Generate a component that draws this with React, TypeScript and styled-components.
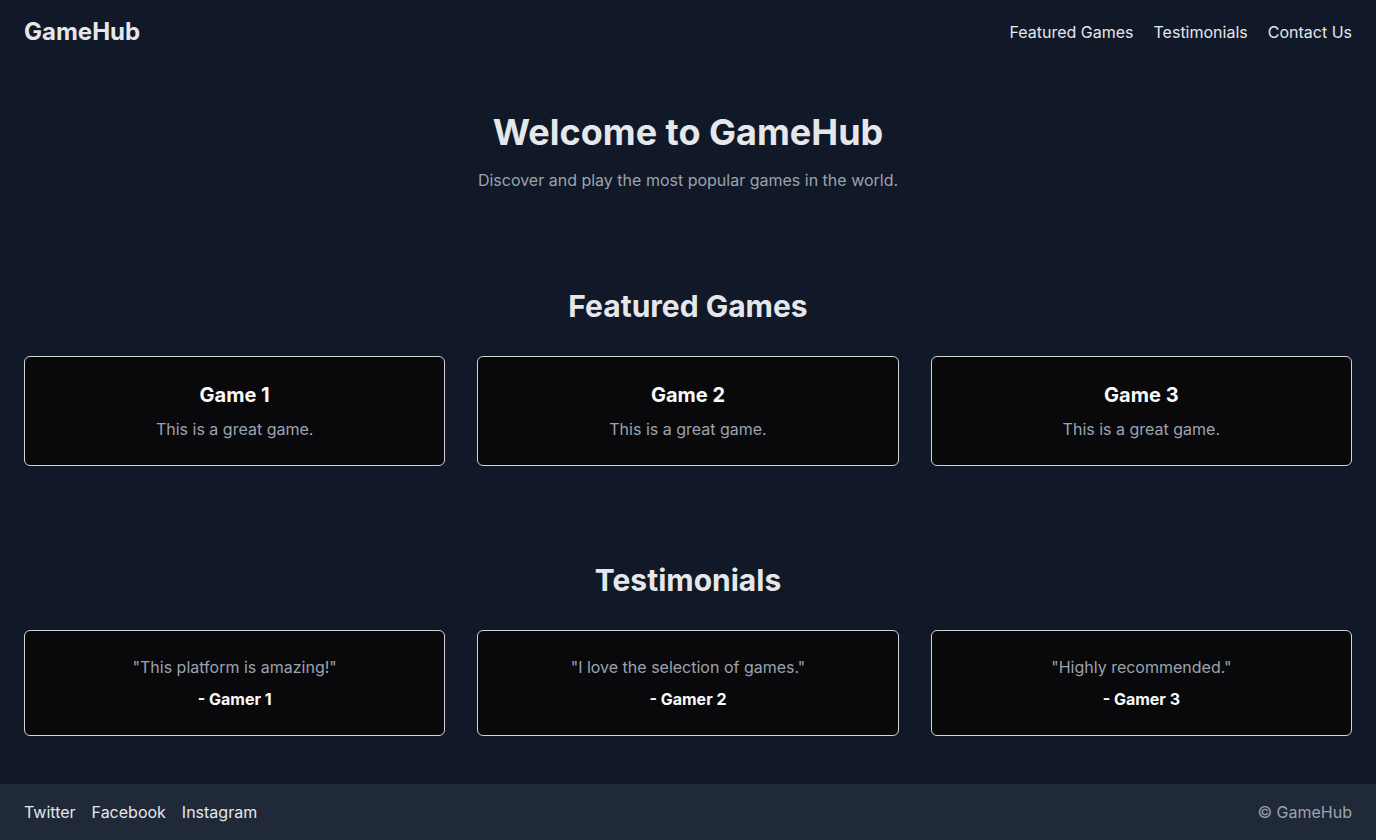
import styled, { createGlobalStyle } from 'styled-components';

const GlobalStyle = createGlobalStyle`
  * {
    box-sizing: border-box;
  }

  body {
    margin: 0;
    background: #111827;
    color: #e5e7eb;
    font-family: Inter, "Noto Sans", sans-serif;
  }
`;

const Page = styled.div`
  min-height: 840px;
  display: flex;
  flex-direction: column;
`;

const Header = styled.header`
  padding: 16px 24px;
  display: flex;
  align-items: center;
  justify-content: space-between;
`;

const Logo = styled.div`
  font-size: 24px;
  line-height: 32px;
  font-weight: 700;
  color: #e5e7eb;
`;

const Nav = styled.nav`
  display: flex;
  gap: 20px;
`;

const NavLink = styled.a`
  font-size: 16px;
  line-height: 24px;
  color: #e5e7eb;
  text-decoration: none;
`;

const Hero = styled.section`
  padding: 48px 24px;
  text-align: center;
`;

const HeroTitle = styled.h1`
  margin: 0 0 16px;
  font-size: 36px;
  line-height: 40px;
  font-weight: 700;
  color: #e5e7eb;
`;

const HeroText = styled.p`
  margin: 0;
  font-size: 16px;
  line-height: 24px;
  color: #9ca3af;
`;

const Section = styled.section`
  padding: 48px 24px;
`;

const SectionTitle = styled.h2`
  margin: 0 0 32px;
  font-size: 30px;
  line-height: 36px;
  font-weight: 700;
  text-align: center;
  color: #e5e7eb;
`;

const Grid = styled.div`
  display: grid;
  grid-template-columns: repeat(3, 1fr);
  gap: 32px;
`;

const Card = styled.div`
  padding: 24px;
  background: #09090b;
  border: 1px solid #d4d4d8;
  border-radius: 6px;
  text-align: center;
`;

const CardTitle = styled.h3`
  margin: 0 0 8px;
  font-size: 20px;
  line-height: 28px;
  font-weight: 700;
  color: #fafafa;
`;

const CardText = styled.p`
  margin: 0 0 8px;
  font-size: 16px;
  line-height: 24px;
  color: #9ca3af;

  &:last-child {
    margin-bottom: 0;
  }
`;

const Author = styled.p`
  margin: 0;
  font-size: 16px;
  line-height: 24px;
  font-weight: 700;
  color: #fafafa;
`;

const Footer = styled.footer`
  margin-top: auto;
  padding: 16px 24px;
  background: #1f2937;
  display: flex;
  align-items: center;
  justify-content: space-between;
`;

const FooterLinks = styled.div`
  display: flex;
  gap: 16px;
`;

const Copy = styled.span`
  font-size: 16px;
  line-height: 24px;
  color: #9ca3af;
`;

const games = ['Game 1', 'Game 2', 'Game 3'];

const testimonials = [
  { quote: '"This platform is amazing!"', author: '- Gamer 1' },
  { quote: '"I love the selection of games."', author: '- Gamer 2' },
  { quote: '"Highly recommended."', author: '- Gamer 3' },
];

export default function App() {
  return (
    <Page>
      <GlobalStyle />
      <Header>
        <Logo>GameHub</Logo>
        <Nav>
          <NavLink href="#featured">Featured Games</NavLink>
          <NavLink href="#testimonials">Testimonials</NavLink>
          <NavLink href="#contact">Contact Us</NavLink>
        </Nav>
      </Header>

      <Hero>
        <HeroTitle>Welcome to GameHub</HeroTitle>
        <HeroText>Discover and play the most popular games in the world.</HeroText>
      </Hero>

      <Section id="featured">
        <SectionTitle>Featured Games</SectionTitle>
        <Grid>
          {games.map((name) => (
            <Card key={name}>
              <CardTitle>{name}</CardTitle>
              <CardText>This is a great game.</CardText>
            </Card>
          ))}
        </Grid>
      </Section>

      <Section id="testimonials">
        <SectionTitle>Testimonials</SectionTitle>
        <Grid>
          {testimonials.map((t) => (
            <Card key={t.author}>
              <CardText>{t.quote}</CardText>
              <Author>{t.author}</Author>
            </Card>
          ))}
        </Grid>
      </Section>

      <Footer id="contact">
        <FooterLinks>
          <NavLink href="#">Twitter</NavLink>
          <NavLink href="#">Facebook</NavLink>
          <NavLink href="#">Instagram</NavLink>
        </FooterLinks>
        <Copy>© GameHub</Copy>
      </Footer>
    </Page>
  );
}
